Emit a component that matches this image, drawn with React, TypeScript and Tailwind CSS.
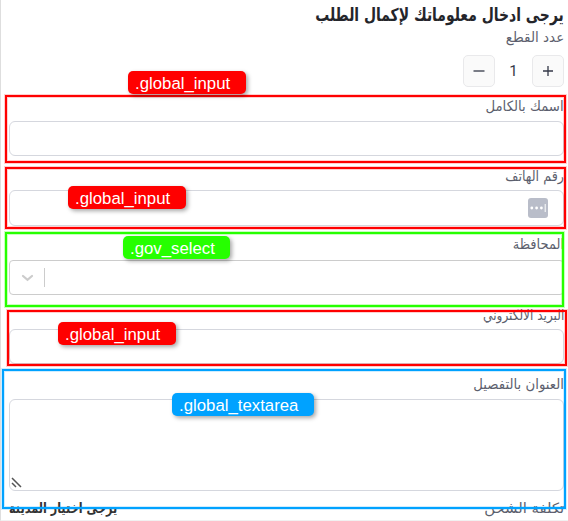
import type { ReactNode } from 'react';

const ARABIC = "font-['DejaVu_Sans',sans-serif]";

function Label({ children, className = '' }: { children: ReactNode; className?: string }) {
  return (
    <div className={`flex h-4 items-center whitespace-nowrap text-[13px] leading-4 text-[#5c5f6e] ${ARABIC}`}>
      <span className={`inline-block origin-right ${className}`}>{children}</span>
    </div>
  );
}

function Frame({ className }: { className: string }) {
  return <div className={`absolute border-2 ${className}`} />;
}

function Tag({ children, className }: { children: ReactNode; className: string }) {
  return (
    <div
      dir="ltr"
      className={`absolute h-[23px] rounded-[5px] pl-[7px] font-['Liberation_Sans',Arial,sans-serif] text-[16.8px] leading-[25px] whitespace-nowrap text-white shadow-[2px_2px_4px_rgba(0,0,0,0.35)] ${className}`}
    >
      {children}
    </div>
  );
}

function StepButton({ plus = false }: { plus?: boolean }) {
  return (
    <button className="flex size-8 items-center justify-center rounded-[5px] border border-[#e9e9eb] bg-[#fafafa]">
      <svg width="12" height="12" viewBox="0 0 12 12" fill="none" stroke="#343848" strokeWidth="1.3">
        <path d={plus ? 'M1 6h10M6 1v10' : 'M.5 6h11'} />
      </svg>
    </button>
  );
}

export default function App() {
  return (
    <div
      dir="rtl"
      className="relative flex h-[521px] w-[568px] flex-col overflow-hidden border-b border-l border-b-[#f1f1f1] border-l-[#dedede] bg-white pr-1 pl-2"
    >
      <h1 className={`flex h-[30px] items-center text-[16px] font-bold whitespace-nowrap text-[#24252b] ${ARABIC}`}>
        <span className="inline-block origin-right scale-x-[0.87] scale-y-[1.12]">يرجى ادخال معلوماتك لإكمال الطلب</span>
      </h1>
      <Label className="scale-x-[1.04] scale-y-[1.08]">عدد القطع</Label>
      <div className="mt-[9px] flex h-8 items-center">
        <StepButton plus />
        <span className="w-[37px] text-center font-['Roboto',sans-serif] text-[15px] text-[#343848]">1</span>
        <StepButton />
      </div>

      <div className="mt-3">
        <Label className="scale-x-[1.02] scale-y-[1.08]">اسمك بالكامل</Label>
        <div className="mt-[6px] h-[35px] rounded-[6px] border border-[#d5d7de]" />
      </div>

      <div className="mt-[13px]">
        <Label className="scale-x-[0.98] scale-y-[1.08]">رقم الهاتف</Label>
        <div className="mt-[5px] flex h-9 items-center rounded-[6px] border border-[#d5d7de] pr-[15px]">
          <svg width="20" height="20" viewBox="0 0 20 20">
            <rect width="20" height="20" rx="3" fill="#b9bdc9" />
            <circle cx="3.8" cy="10" r="1.4" fill="white" />
            <circle cx="8.6" cy="10" r="1.4" fill="white" />
            <circle cx="13.4" cy="10" r="1.4" fill="white" />
            <path d="M17.2 6v8" stroke="white" />
          </svg>
        </div>
      </div>

      <div className="mt-[11px]">
        <Label className="scale-y-[1.08]">المحافظة</Label>
        <div className="mt-[7px] flex h-[35px] items-center justify-end rounded-[4px] border border-[#ccc] pl-[10px]">
          <span className="h-[19px] w-px bg-[#ccc]" />
          <svg className="mr-[9px]" width="15" height="15" viewBox="0 0 20 20" fill="none" stroke="#ccc" strokeWidth="3" strokeLinecap="round">
            <path d="M4 8l6 5 6-5" />
          </svg>
        </div>
      </div>

      <div className="mt-[13px]">
        <Label className="scale-x-[0.93] scale-y-[1.08]">البريد الالكتروني</Label>
        <div className="mt-[5px] h-[35px] rounded-[6px] border border-[#d5d7de]" />
      </div>

      <div className="mt-[13px]">
        <Label className="scale-x-[1.02] scale-y-[1.08]">العنوان بالتفصيل</Label>
        <div className="mt-[6px] flex h-[92px] items-end justify-end rounded-[6px] border border-[#d5d7de] pb-[2px] pl-px">
          <svg width="11" height="11" viewBox="0 0 11 11" fill="none" stroke="#555" strokeWidth="1.5">
            <path d="M1 1l9 9M1 6l4 4" />
          </svg>
        </div>
      </div>

      <div className="mt-[10px] flex justify-between">
        <Label className="scale-x-[1.14] scale-y-[1.08]">تكلفة الشحن</Label>
        <div className={`flex h-4 items-center text-[13px] font-bold whitespace-nowrap text-[#333] ${ARABIC}`}>
          <span className="inline-block origin-left scale-x-[0.865] scale-y-[1.08]">يرجى اختيار المدينة</span>
        </div>
      </div>

      <Frame className="top-[95px] left-[4px] h-[68px] w-[561px] border-[#f00] shadow-[0_0_0_1px_#ff000030,inset_0_0_0_1px_#ff000030]" />
      <Frame className="top-[167px] left-[4px] h-[62px] w-[561px] border-[#f00] shadow-[0_0_0_1px_#ff000030,inset_0_0_0_1px_#ff000030]" />
      <Frame className="top-[232px] left-[4px] h-[75px] w-[559px] border-[#26ff00] shadow-[0_0_0_1px_#26ff0040,inset_0_0_0_1px_#26ff0040]" />
      <Frame className="top-[310px] left-[6px] h-[56px] w-[560px] border-[#f00] shadow-[0_0_0_1px_#ff000030,inset_0_0_0_1px_#ff000030]" />
      <Frame className="top-[369px] left-[1px] h-[140px] w-[564px] border-[#00a2ff] shadow-[0_0_0_1px_#00a2ff30,inset_0_0_0_1px_#00a2ff30]" />

      <Tag className="top-[71px] left-[127px] w-[118px] bg-[#f00]">.global_input</Tag>
      <Tag className="top-[186px] left-[67px] w-[118px] bg-[#f00]">.global_input</Tag>
      <Tag className="top-[236px] left-[122px] w-[107px] bg-[#26ff00]">.gov_select</Tag>
      <Tag className="top-[322px] left-[57px] w-[118px] bg-[#f00]">.global_input</Tag>
      <Tag className="top-[393px] left-[171px] w-[142px] bg-[#00a2ff]">.global_textarea</Tag>
    </div>
  );
}
